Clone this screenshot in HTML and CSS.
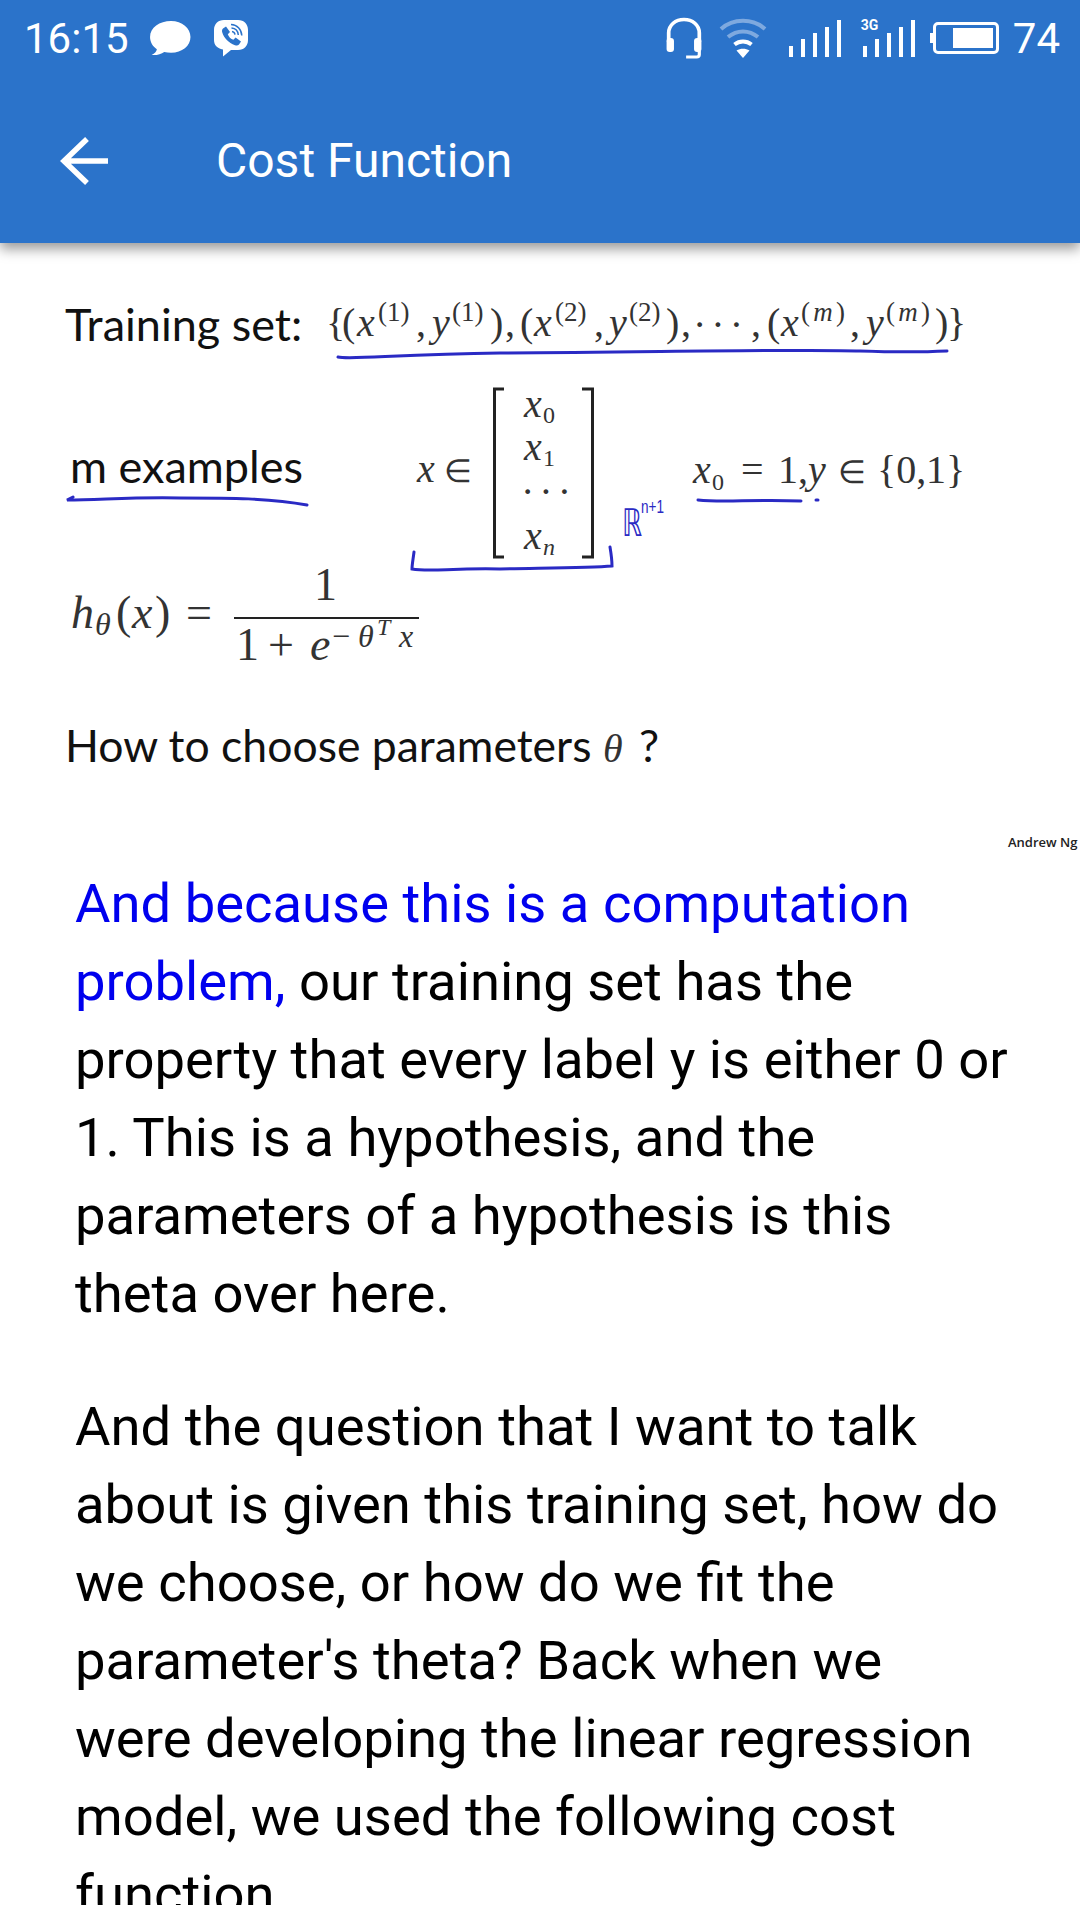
FILE: index.html
```html
<!DOCTYPE html>
<html lang="en">
<head>
    <meta charset="UTF-8">
    <meta name="viewport" content="width=device-width, initial-scale=1.0">
    <title>Cost Function</title>
    <link rel="stylesheet" href="styles.css">
</head>
<body>
    <header class="app-header">
        <div class="status-bar">
            <div class="status-left">
                <span class="clock">16:15</span>
                <svg class="icon-chat" width="42" height="36" viewBox="0 0 40 36" preserveAspectRatio="none">
                    <path fill="#fff" d="M21 1C10 1 1 7.500 1 17c0 5 2.500 9.300 6.500 12.200C7 31.500 5.500 33.500 2.500 35c4.500.5 9-.7 12-3 2 .4 4.200.7 6.500.7 10.500 0 18.500-6.800 18.500-15.700S31.500 1 21 1z"/>
                </svg>
                <svg class="icon-viber" width="36" height="38" viewBox="0 0 36 38">
                    <path fill="#fff" d="M11 1h14c6 0 10 4 10 10v10c0 6-4 10-10 10h-7l-8 6.500V30.500C4 29.500 1 26 1 21V11C1 5 5 1 11 1z"/>
                    <path fill="#2b73ca" d="M10 9.500l3-2 4 5.500-2.200 2.200c.8 2.600 3 4.800 5.600 5.600l2.200-2.200 5.400 4-2 3c-1 1.200-2.500 1.200-4 .6C15.500 23.800 11 19.300 9.200 13.300c-.4-1.500-.2-2.800.8-3.800z"/>
                    <g fill="none" stroke="#2b73ca" stroke-width="1.500">
                        <path d="M18 5.500c6 .3 10.500 4.800 10.800 11"/>
                        <path d="M18.500 9c3.800.3 6.500 3 6.800 7"/>
                        <path d="M19 12.500c1.800.2 2.800 1.300 3 3.200"/>
                    </g>
                </svg>
            </div>
            <div class="status-right">
                <svg class="icon-headset" width="38" height="42" viewBox="0 0 36 42" preserveAspectRatio="none">
                    <path fill="none" stroke="#fff" stroke-width="3.500" d="M3.500 25V16C3.500 8 10 2.500 18 2.500S32.500 8 32.500 16v9"/>
                    <rect x="1.500" y="21" width="7" height="14" rx="3" fill="#fff"/>
                    <rect x="27.500" y="21" width="7" height="14" rx="3" fill="#fff"/>
                    <path fill="none" stroke="#fff" stroke-width="3" d="M32.500 34v3.500c0 1.500-1 2.500-2.500 2.500h-10"/>
                </svg>
                <svg class="icon-wifi" width="48" height="42" viewBox="0 0 48 42">
                    <g fill="none" stroke-width="4">
                        <path stroke="#7ea9df" d="M2 12C14 1 34 1 46 12"/>
                        <path stroke="#7ea9df" d="M9 20c9-7.500 21-7.500 30 0"/>
                        <path stroke="#fff" d="M15.500 27.500c5-4 12-4 17 0"/>
                    </g>
                    <path fill="#fff" d="M17.500 33.500c4-2.500 9-2.500 13 0L24 41z"/>
                </svg>
                <svg class="icon-signal" width="52" height="38" viewBox="0 0 52 38">
                    <g fill="#fff">
                        <rect x="0" y="27" width="4" height="11"/>
                        <rect x="12" y="20" width="4" height="18"/>
                        <rect x="24" y="14" width="4" height="24"/>
                        <rect x="36" y="8" width="4" height="30"/>
                        <rect x="48" y="1" width="4" height="37"/>
                    </g>
                </svg>
                <div class="signal-3g">
                    <span class="net-label">3G</span>
                    <svg width="52" height="38" viewBox="0 0 52 38">
                        <g fill="#fff">
                            <rect x="0" y="27" width="4" height="11"/>
                            <rect x="12" y="20" width="4" height="18"/>
                            <rect x="24" y="14" width="4" height="24"/>
                            <rect x="36" y="8" width="4" height="30"/>
                            <rect x="48" y="1" width="4" height="37"/>
                        </g>
                    </svg>
                </div>
                <div class="battery">
                    <div class="battery-fill"></div>
                </div>
                <span class="battery-level">74</span>
            </div>
        </div>
        <div class="toolbar">
            <svg class="back-arrow" width="48" height="48" viewBox="0 0 48 48">
                <path fill="none" stroke="#fff" stroke-width="5.500" d="M48 24H4M27 2L4 24 27 46"/>
            </svg>
            <h1 class="toolbar-title">Cost Function</h1>
        </div>
    </header>

    <main class="content">
        <svg class="slide" width="1080" height="617" viewBox="0 243 1080 617">
            <text class="slide-label" x="65" y="341">Training set:</text>
            <text class="slide-label" x="70" y="483">m examples</text>
            <text class="slide-label question" x="65" y="762">How to choose parameters</text>
            <text class="math-italic" x="603" y="762">θ</text>
            <text class="slide-label" x="639" y="762">?</text>
            <text class="credit" x="1008" y="847">Andrew Ng</text>

            <!-- training set -->
            <text class="math" x="326" y="336">{</text>
            <text class="math" x="342" y="336">(</text>
            <text class="math-italic" x="357" y="336">x</text>
            <text class="math-small" x="378" y="321">(1)</text>
            <text class="math" x="416" y="336">,</text>
            <text class="math-italic" x="432" y="336">y</text>
            <text class="math-small" x="452" y="321">(1)</text>
            <text class="math" x="490" y="336">)</text>
            <text class="math" x="505" y="336">,</text>
            <text class="math" x="520" y="336">(</text>
            <text class="math-italic" x="534" y="336">x</text>
            <text class="math-small" x="555" y="321">(2)</text>
            <text class="math" x="594" y="336">,</text>
            <text class="math-italic" x="609" y="336">y</text>
            <text class="math-small" x="629" y="321">(2)</text>
            <text class="math" x="666" y="336">)</text>
            <text class="math" x="681" y="336">,</text>
            <text class="math dots" x="693" y="338">···</text>
            <text class="math" x="751" y="336">,</text>
            <text class="math" x="767" y="336">(</text>
            <text class="math-italic" x="781" y="336">x</text>
            <text class="math-small" x="801" y="321" textLength="44">(<tspan class="math-small-italic">m</tspan>)</text>
            <text class="math" x="850" y="336">,</text>
            <text class="math-italic" x="866" y="336">y</text>
            <text class="math-small" x="886" y="321" textLength="44">(<tspan class="math-small-italic">m</tspan>)</text>
            <text class="math" x="935" y="336">)</text>
            <text class="math" x="947" y="336">}</text>

            <!-- feature vector -->
            <text class="math-italic" x="417" y="482">x</text>
            <text class="math element" x="444" y="482">∈</text>
            <path class="ink" d="M504 389H494.500V557H504M582 389H592.500V557H582"/>
            <text class="math-italic" x="524" y="417">x</text>
            <text class="math-sub" x="543" y="423">0</text>
            <text class="math-italic" x="524" y="460">x</text>
            <text class="math-sub" x="543" y="466">1</text>
            <text class="math dots" x="521" y="505">···</text>
            <text class="math-italic" x="524" y="549">x</text>
            <text class="math-sub-italic" x="543" y="555">n</text>
            <text class="math-italic" x="693" y="483">x</text>
            <text class="math-sub" x="712" y="490">0</text>
            <text class="math" x="741" y="483">=</text>
            <text class="math" x="778" y="483">1,</text>
            <text class="math-italic" x="808" y="483">y</text>
            <text class="math element" x="838" y="483">∈</text>
            <text class="math" x="877" y="483">{0,</text>
            <text class="math" x="926" y="483">1}</text>

            <!-- hypothesis -->
            <text class="hyp-italic" x="71" y="628">h</text>
            <text class="hyp-sub" x="95" y="635">θ</text>
            <text class="hyp" x="116" y="628">(</text>
            <text class="hyp-italic" x="132" y="628">x</text>
            <text class="hyp" x="155" y="628">)</text>
            <text class="hyp" x="186" y="628">=</text>
            <text class="hyp" x="314" y="600">1</text>
            <path class="ink thin" d="M234 618H419"/>
            <text class="hyp" x="236" y="660">1</text>
            <text class="hyp" x="268" y="660">+</text>
            <text class="hyp-italic" x="310" y="660">e</text>
            <text class="hyp-sub-upright" x="332" y="647">−</text>
            <text class="hyp-sub" x="358" y="647">θ</text>
            <text class="hyp-tiny" x="377" y="635">T</text>
            <text class="hyp-sub" x="399" y="647">x</text>

            <!-- handwritten notes -->
            <g class="pen">
                <path d="M338 357C350 360 400 354 500 353C660 352 810 349 860 351C890 352 925 352 947 351"/>
                <path d="M73 497L67 500C100 500 130 497 180 498C230 498 270 498 307 505"/>
                <path d="M414 552C413 560 412 565 412 569C430 572 450 568 500 569C550 568 590 568 612 566C612 560 611 553 610 547"/>
                <path d="M698 500C725 503 750 499 801 501"/>
                <path d="M816 500h2"/>
            </g>
            <text class="pen-text" x="622" y="536" textLength="20" lengthAdjust="spacingAndGlyphs">ℝ</text>
            <text class="pen-sup" x="641" y="513" textLength="23" lengthAdjust="spacingAndGlyphs">n+1</text>
        </svg>

        <article class="lecture">
            <p><span class="highlight">And because this is a computation problem,</span> our training set has the property that every label y is either 0 or 1. This is a hypothesis, and the parameters of a hypothesis is this theta over here.</p>
            <p>And the question that I want to talk about is given this training set, how do we choose, or how do we fit the parameter's theta? Back when we were developing the linear regression model, we used the following cost function</p>
        </article>
    </main>
</body>
</html>
```

FILE: styles.css
```css
html, body {
    margin: 0;
    padding: 0;
    background-color: #fff;
}
body {
    width: 1080px;
    height: 1920px;
    overflow: hidden;
    font-family: Roboto, sans-serif;
}
.app-header {
    position: relative;
    z-index: 2;
    height: 243px;
    background-color: #2b73ca;
    box-shadow: 0 6px 12px rgba(0, 0, 0, 0.4);
    color: #fff;
}
.status-bar {
    display: flex;
    justify-content: space-between;
    align-items: center;
    height: 76px;
    padding: 0 20px 0 24px;
}
.status-left, .status-right {
    display: flex;
    align-items: center;
}
.clock {
    font-size: 42px;
    width: 125px;
}
.icon-viber {
    margin-left: 22px;
}
.icon-wifi {
    margin-left: 16px;
}
.icon-signal {
    margin-left: 22px;
}
.signal-3g {
    position: relative;
    margin-left: 22px;
    height: 38px;
}
.net-label {
    position: absolute;
    top: -1px;
    left: -2px;
    font-size: 14px;
    font-weight: 700;
    line-height: 14px;
}
.battery {
    position: relative;
    display: flex;
    justify-content: flex-end;
    box-sizing: border-box;
    width: 66px;
    height: 32px;
    margin-left: 18px;
    padding: 3px;
    border: 3px solid #fff;
    border-radius: 5px;
}
.battery::before {
    content: "";
    position: absolute;
    left: -6px;
    top: 8px;
    width: 3px;
    height: 10px;
    background-color: #fff;
}
.battery-fill {
    width: 40px;
    background-color: #fff;
}
.battery-level {
    margin-left: 14px;
    font-size: 42px;
}
.toolbar {
    display: flex;
    align-items: center;
    height: 169px;
    padding-left: 60px;
}
.toolbar-title {
    margin: 0 0 0 108px;
    font-size: 48px;
    font-weight: 400;
}
.content {
    height: 1662px;
    overflow: hidden;
}
.slide {
    display: block;
}
.slide-label {
    font-family: Lato, sans-serif;
    font-size: 45px;
    fill: #111;
}
.slide-label.question {
    font-size: 44.5px;
}
.credit {
    font-family: "Open Sans", sans-serif;
    font-size: 13px;
    font-weight: 600;
    fill: #222;
}
.math, .math-italic {
    font-family: "Liberation Serif", serif;
    font-size: 40px;
    fill: #333;
}
.math-italic {
    font-style: italic;
}
.math.element {
    font-size: 32px;
}
.dots {
    letter-spacing: 5px;
}
.math-small, .math-small-italic {
    font-family: "Liberation Serif", serif;
    font-size: 27px;
    fill: #333;
}
.math-small-italic {
    font-style: italic;
}
.math-sub, .math-sub-italic {
    font-family: "Liberation Serif", serif;
    font-size: 24px;
    fill: #333;
}
.math-sub-italic {
    font-style: italic;
}
.hyp, .hyp-italic, .hyp-sub, .hyp-sub-upright, .hyp-tiny {
    font-family: "Liberation Serif", serif;
    font-size: 46px;
    fill: #333;
}
.hyp-italic {
    font-style: italic;
}
.hyp-sub, .hyp-sub-upright {
    font-size: 32px;
}
.hyp-sub, .hyp-tiny {
    font-style: italic;
}
.hyp-tiny {
    font-size: 24px;
}
.ink {
    fill: none;
    stroke: #222;
    stroke-width: 3;
}
.ink.thin {
    stroke-width: 2;
}
.pen {
    fill: none;
    stroke: #2a2ac4;
    stroke-width: 3;
    stroke-linecap: round;
}
.pen-text {
    font-family: "DejaVu Sans", sans-serif;
    font-size: 38px;
    fill: #2a2ac4;
}
.pen-sup {
    font-family: "Liberation Sans", sans-serif;
    font-size: 19px;
    fill: #2a2ac4;
}
.lecture {
    padding: 5px 72px 0 75px;
}
.lecture p {
    margin: 0 0 55px;
    font-size: 54.4px;
    line-height: 78px;
    color: #000;
}
.highlight {
    color: #0000ee;
}
```
